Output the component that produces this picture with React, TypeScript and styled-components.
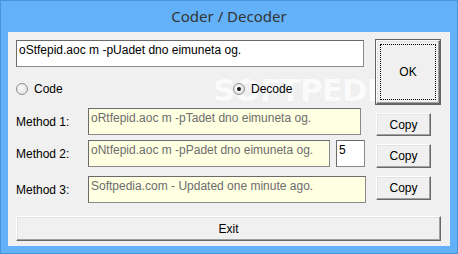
import React from "react";
import styled, { createGlobalStyle } from "styled-components";

const GlobalStyle = createGlobalStyle`
  html, body { margin: 0; padding: 0; }
  body { background: #62b1f8; }
`;

const Window = styled.div`
  position: relative;
  width: 458px;
  height: 254px;
  box-sizing: border-box;
  background: #63b2f9;
  border: 1px solid #4b93d9;
  display: flex;
  flex-direction: column;
  overflow: hidden;
`;

const TitleBar = styled.div`
  height: 30px;
  display: flex;
  align-items: center;
  justify-content: center;
  font-family: "Noto Sans", "Open Sans", sans-serif;
  font-size: 15px;
  color: #333;
  padding-bottom: 1px;
`;

const Client = styled.div`
  margin: 0 7px;
  height: 214px;
  background: #f0f0f0;
  box-sizing: border-box;
  padding: 8px 0 0 8px;
  font-family: "Liberation Sans", Arial, sans-serif;
  font-size: 12px;
  color: #000;
  position: relative;
`;

const Content = styled.div`
  position: relative;
  z-index: 1;
`;

const TopSection = styled.div`
  display: flex;
  height: 64px;
`;

const LeftColumn = styled.div`
  width: 348px;
  display: flex;
  flex-direction: column;
`;

const TextBox = styled.div<{ $w: number; $bg?: string; $color?: string }>`
  width: ${(p) => p.$w}px;
  height: 27px;
  box-sizing: border-box;
  background: ${(p) => p.$bg ?? "#fff"};
  color: ${(p) => p.$color ?? "#000"};
  border: 1px solid #6b6b6b;
  border-right-color: #8a8a8a;
  border-bottom-color: #8a8a8a;
  padding: 2px 2px;
  white-space: nowrap;
  overflow: hidden;
  line-height: 14px;
`;

const RadioRow = styled.div`
  display: flex;
  align-items: center;
  margin-top: 15px;
  height: 13px;
`;

const RadioOption = styled.label<{ $w?: number }>`
  display: flex;
  align-items: center;
  width: ${(p) => (p.$w ? `${p.$w}px` : "auto")};
  gap: 6px;
`;

const RadioCircle = styled.span<{ $checked?: boolean }>`
  width: 12px;
  height: 12px;
  box-sizing: border-box;
  border-radius: 50%;
  border: 1px solid #8e8f8f;
  background: radial-gradient(circle at 40% 40%, #fafafa, #dcdcdc);
  display: flex;
  align-items: center;
  justify-content: center;
  &::after {
    content: "";
    width: 4px;
    height: 4px;
    border-radius: 50%;
    background: ${(p) => (p.$checked ? "#1a1a1a" : "transparent")};
  }
`;

const Button = styled.button<{ $w: number; $h: number; $default?: boolean }>`
  width: ${(p) => p.$w}px;
  height: ${(p) => p.$h}px;
  box-sizing: border-box;
  background: #f0f0f0;
  font-family: "Liberation Sans", Arial, sans-serif;
  font-size: 12px;
  color: #000;
  padding: 0;
  border: 1px solid;
  border-color: #fff #696969 #696969 #fff;
  box-shadow: inset -1px -1px 0 #a0a0a0, inset 1px 1px 0 #e3e3e3;
  outline: ${(p) => (p.$default ? "1px solid #646464" : "none")};
  outline-offset: 0;
  position: relative;
  cursor: default;
`;

const FocusRing = styled.span`
  position: absolute;
  inset: 3px;
  border: 1px dotted #000;
  display: flex;
  align-items: center;
  justify-content: center;
`;

const MethodRow = styled.div<{ $mt: number }>`
  display: flex;
  align-items: flex-start;
  margin-top: ${(p) => p.$mt}px;
  height: 27px;
`;

const Label = styled.div`
  width: 72px;
  height: 27px;
  display: flex;
  align-items: center;
  padding-top: 1px;
  box-sizing: border-box;
`;

const Spacer = styled.div<{ $w: number }>`
  width: ${(p) => p.$w}px;
  flex-shrink: 0;
`;

const CopyWrap = styled.div<{ $mt: number }>`
  margin-top: ${(p) => p.$mt}px;
`;

const ExitRow = styled.div`
  margin-top: 13px;
`;

const Watermark = styled.div`
  position: absolute;
  z-index: 0;
  left: 205px;
  top: 40px;
  font-family: "DejaVu Sans", sans-serif;
  font-weight: bold;
  font-size: 31px;
  letter-spacing: -1px;
  color: #fbfbfb;
  text-shadow: 0 0 1px #e6e6e6;
  pointer-events: none;
`;

const fieldBg = "#ffffe1";
const fieldColor = "#6d6d6d";

const App: React.FC = () => {
  return (
    <>
      <GlobalStyle />
      <Window>
        <TitleBar>Coder / Decoder</TitleBar>
        <Client>
          <Watermark aria-hidden>SOFTPEDIA</Watermark>
          <Content>
            <TopSection>
              <LeftColumn>
                <TextBox $w={348}>oStfepid.aoc m -pUadet dno eimuneta og.</TextBox>
                <RadioRow>
                  <RadioOption $w={217}>
                    <RadioCircle />
                    Code
                  </RadioOption>
                  <RadioOption>
                    <RadioCircle $checked />
                    Decode
                  </RadioOption>
                </RadioRow>
              </LeftColumn>
              <Spacer $w={12} />
              <Button $w={64} $h={64} $default>
                <FocusRing>OK</FocusRing>
              </Button>
            </TopSection>

            <MethodRow $mt={4}>
              <Label>Method 1:</Label>
              <TextBox $w={273} $bg={fieldBg} $color={fieldColor}>
                oRtfepid.aoc m -pTadet dno eimuneta og.
              </TextBox>
              <Spacer $w={15} />
              <CopyWrap $mt={5}>
                <Button $w={55} $h={23}>Copy</Button>
              </CopyWrap>
            </MethodRow>

            <MethodRow $mt={5}>
              <Label>Method 2:</Label>
              <TextBox $w={242} $bg={fieldBg} $color={fieldColor}>
                oNtfepid.aoc m -pPadet dno eimuneta og.
              </TextBox>
              <Spacer $w={6} />
              <TextBox $w={29}>5</TextBox>
              <Spacer $w={11} />
              <CopyWrap $mt={4}>
                <Button $w={55} $h={24}>Copy</Button>
              </CopyWrap>
            </MethodRow>

            <MethodRow $mt={9}>
              <Label>Method 3:</Label>
              <TextBox $w={278} $bg={fieldBg} $color={fieldColor}>
                Softpedia.com - Updated one minute ago.
              </TextBox>
              <Spacer $w={10} />
              <CopyWrap $mt={0}>
                <Button $w={55} $h={24}>Copy</Button>
              </CopyWrap>
            </MethodRow>

            <ExitRow>
              <Button $w={425} $h={25}>Exit</Button>
            </ExitRow>
          </Content>
        </Client>
      </Window>
    </>
  );
};

export default App;
